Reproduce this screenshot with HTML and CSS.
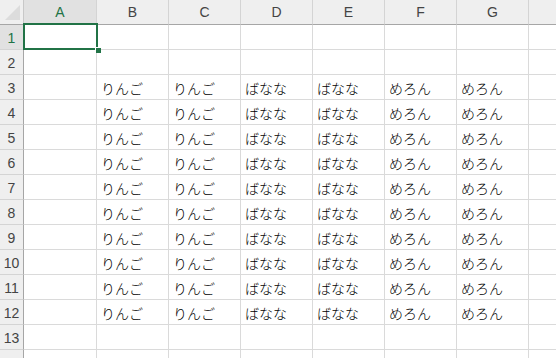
FILE: index.html
```html
<!DOCTYPE html>
<html lang="ja">
<head>
    <meta charset="UTF-8">
    <title>Sheet1</title>
    <link rel="stylesheet" href="styles.css">
</head>
<body>
    <div class="sheet">
        <div class="grid">
            <div class="corner">
                <svg width="24" height="25" viewBox="0 0 24 25"><polygon points="20,5 20,20 5,20" fill="#dcdcdc"/></svg>
            </div>
            <div class="col-head active">A</div>
            <div class="col-head">B</div>
            <div class="col-head">C</div>
            <div class="col-head">D</div>
            <div class="col-head">E</div>
            <div class="col-head">F</div>
            <div class="col-head">G</div>
            <div class="col-head"></div>

            <div class="row-head active">1</div>
            <div class="cell"></div><div class="cell"></div><div class="cell"></div><div class="cell"></div><div class="cell"></div><div class="cell"></div><div class="cell"></div><div class="cell"></div>

            <div class="row-head">2</div>
            <div class="cell"></div><div class="cell"></div><div class="cell"></div><div class="cell"></div><div class="cell"></div><div class="cell"></div><div class="cell"></div><div class="cell"></div>

            <div class="row-head">3</div>
            <div class="cell"></div><div class="cell">りんご</div><div class="cell">りんご</div><div class="cell">ばなな</div><div class="cell">ばなな</div><div class="cell">めろん</div><div class="cell">めろん</div><div class="cell"></div>

            <div class="row-head">4</div>
            <div class="cell"></div><div class="cell">りんご</div><div class="cell">りんご</div><div class="cell">ばなな</div><div class="cell">ばなな</div><div class="cell">めろん</div><div class="cell">めろん</div><div class="cell"></div>

            <div class="row-head">5</div>
            <div class="cell"></div><div class="cell">りんご</div><div class="cell">りんご</div><div class="cell">ばなな</div><div class="cell">ばなな</div><div class="cell">めろん</div><div class="cell">めろん</div><div class="cell"></div>

            <div class="row-head">6</div>
            <div class="cell"></div><div class="cell">りんご</div><div class="cell">りんご</div><div class="cell">ばなな</div><div class="cell">ばなな</div><div class="cell">めろん</div><div class="cell">めろん</div><div class="cell"></div>

            <div class="row-head">7</div>
            <div class="cell"></div><div class="cell">りんご</div><div class="cell">りんご</div><div class="cell">ばなな</div><div class="cell">ばなな</div><div class="cell">めろん</div><div class="cell">めろん</div><div class="cell"></div>

            <div class="row-head">8</div>
            <div class="cell"></div><div class="cell">りんご</div><div class="cell">りんご</div><div class="cell">ばなな</div><div class="cell">ばなな</div><div class="cell">めろん</div><div class="cell">めろん</div><div class="cell"></div>

            <div class="row-head">9</div>
            <div class="cell"></div><div class="cell">りんご</div><div class="cell">りんご</div><div class="cell">ばなな</div><div class="cell">ばなな</div><div class="cell">めろん</div><div class="cell">めろん</div><div class="cell"></div>

            <div class="row-head">10</div>
            <div class="cell"></div><div class="cell">りんご</div><div class="cell">りんご</div><div class="cell">ばなな</div><div class="cell">ばなな</div><div class="cell">めろん</div><div class="cell">めろん</div><div class="cell"></div>

            <div class="row-head">11</div>
            <div class="cell"></div><div class="cell">りんご</div><div class="cell">りんご</div><div class="cell">ばなな</div><div class="cell">ばなな</div><div class="cell">めろん</div><div class="cell">めろん</div><div class="cell"></div>

            <div class="row-head">12</div>
            <div class="cell"></div><div class="cell">りんご</div><div class="cell">りんご</div><div class="cell">ばなな</div><div class="cell">ばなな</div><div class="cell">めろん</div><div class="cell">めろん</div><div class="cell"></div>

            <div class="row-head">13</div>
            <div class="cell"></div><div class="cell"></div><div class="cell"></div><div class="cell"></div><div class="cell"></div><div class="cell"></div><div class="cell"></div><div class="cell"></div>

            <div class="row-head">14</div>
            <div class="cell"></div><div class="cell"></div><div class="cell"></div><div class="cell"></div><div class="cell"></div><div class="cell"></div><div class="cell"></div><div class="cell"></div>
        </div>

        <!-- active cell A1 -->
        <div class="selection"><span class="fill-handle"></span></div>
    </div>
</body>
</html>
```

FILE: styles.css
```css
* {
    box-sizing: border-box;
}

body {
    margin: 0;
    background: #ffffff;
    overflow: hidden;
    font-family: "Noto Sans CJK JP", "Noto Sans", sans-serif;
}

.sheet {
    position: relative;
    width: 556px;
    height: 358px;
    overflow: hidden;
}

.grid {
    display: grid;
    grid-template-columns: 24px 73px repeat(6, 72px) 72px;
    grid-auto-rows: 25px;
    width: 601px;
}

.corner {
    background: #efefef;
    border-right: 1px solid #c8c8c8;
    border-bottom: 1px solid #a6a6a6;
}

.corner svg {
    display: block;
}

.col-head {
    display: flex;
    align-items: center;
    justify-content: center;
    background: #efefef;
    color: #444;
    font-family: "Liberation Sans", Arial, sans-serif;
    font-size: 14px;
    border-right: 1px solid #d4d4d4;
    border-bottom: 1px solid #a6a6a6;
}

.row-head {
    display: flex;
    align-items: center;
    justify-content: center;
    background: #efefef;
    color: #444;
    font-family: "Liberation Sans", Arial, sans-serif;
    font-size: 14px;
    padding-top: 1px;
    border-right: 1px solid #a6a6a6;
    border-bottom: 1px solid #d4d4d4;
}

.col-head.active,
.row-head.active {
    background: #e1e1e1;
    color: #217346;
}

.cell {
    display: flex;
    align-items: center;
    padding: 2px 0 0 4px;
    font-size: 14px;
    font-weight: 300;
    color: #000;
    white-space: nowrap;
    border-right: 1px solid #dadada;
    border-bottom: 1px solid #dadada;
}

.selection {
    position: absolute;
    left: 23px;
    top: 23px;
    width: 75px;
    height: 27px;
    border: 2px solid #217346;
}

.fill-handle {
    position: absolute;
    right: -5px;
    bottom: -5px;
    width: 6px;
    height: 6px;
    background: #217346;
    border: 1px solid #fff;
    border-width: 1px 0 0 1px;
}
```
